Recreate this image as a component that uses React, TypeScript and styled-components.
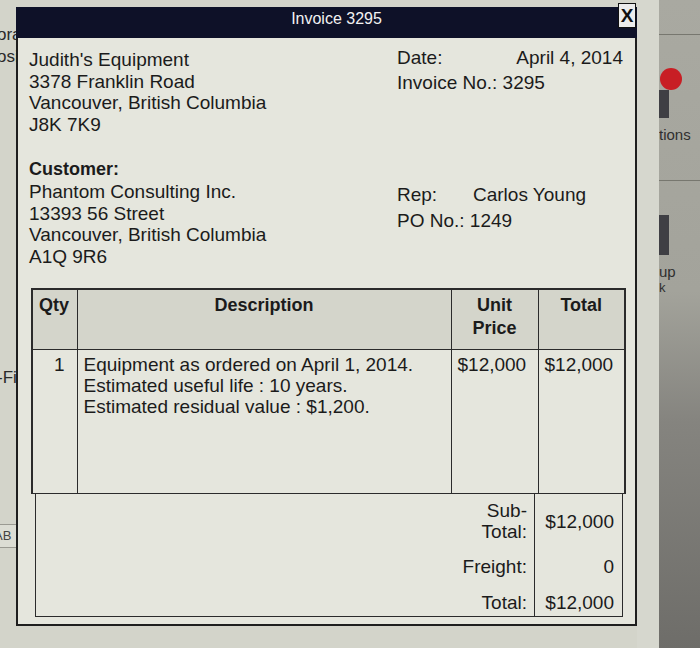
import React from 'react';
import styled, {createGlobalStyle} from "styled-components";

type LineItem = {
    qty: number
    lines: Array<string>
    unitPrice: string
    total: string
}

type TotalLine = {
    label: React.ReactNode
    value: string
    height: number
    pad: number
}

const items: Array<LineItem> = [
    {
        qty: 1,
        lines: [
            'Equipment as ordered on April 1, 2014.',
            'Estimated useful life : 10 years.',
            'Estimated residual value : $1,200.'
        ],
        unitPrice: '$12,000',
        total: '$12,000'
    }
]

const totals: Array<TotalLine> = [
    {label: <>Sub-<br/>Total:</>, value: '$12,000', height: 50, pad: 5},
    {label: 'Freight:', value: '0', height: 38, pad: 8},
    {label: 'Total:', value: '$12,000', height: 34, pad: 8},
]

const App = () => {
    return (
        <>
            <GlobalStyle/>
            <Screen>
                <LeftGutter>
                    <Fragment top={25}>ora</Fragment>
                    <Fragment top={2}>osi</Fragment>
                    <Fragment top={301}>-Fi</Fragment>
                    <GhostButton>AB</GhostButton>
                </LeftGutter>

                <Window>
                    <TitleBar>
                        <span/>
                        <Title>Invoice 3295</Title>
                        <CloseBox>X</CloseBox>
                    </TitleBar>

                    <Body>
                        <InfoRow>
                            <Block>
                                <div>Judith's Equipment</div>
                                <div>3378 Franklin Road</div>
                                <div>Vancouver, British Columbia</div>
                                <div>J8K 7K9</div>
                            </Block>
                            <SideBlock shift={-4} lineHeight={25}>
                                <Pair>
                                    <span>Date:</span>
                                    <span>April 4, 2014</span>
                                </Pair>
                                <div>Invoice No.: 3295</div>
                            </SideBlock>
                        </InfoRow>

                        <InfoRow gap={24}>
                            <Block>
                                <Strong>Customer:</Strong>
                                <div>Phantom Consulting Inc.</div>
                                <div>13393 56 Street</div>
                                <div>Vancouver, British Columbia</div>
                                <div>A1Q 9R6</div>
                            </Block>
                            <SideBlock shift={23} lineHeight={26}>
                                <Pair start>
                                    <Label>Rep:</Label>
                                    <span>Carlos Young</span>
                                </Pair>
                                <div>PO No.: 1249</div>
                            </SideBlock>
                        </InfoRow>

                        <Table>
                            <colgroup>
                                <col style={{width: 45}}/>
                                <col/>
                                <col style={{width: 87}}/>
                                <col style={{width: 87}}/>
                            </colgroup>
                            <thead>
                            <HeadRow>
                                <Th align="left">Qty</Th>
                                <Th>Description</Th>
                                <Th>Unit<br/>Price</Th>
                                <Th>Total</Th>
                            </HeadRow>
                            </thead>
                            <tbody>
                            {items.map((item, i) => (
                                <BodyRow key={i}>
                                    <Td align="right">{item.qty}</Td>
                                    <Td>
                                        {item.lines.map(line => <div key={line}>{line}</div>)}
                                    </Td>
                                    <Td>{item.unitPrice}</Td>
                                    <Td>{item.total}</Td>
                                </BodyRow>
                            ))}
                            </tbody>
                        </Table>

                        <Totals>
                            <LabelColumn>
                                {totals.map((t, i) => (
                                    <TotalCell key={i} height={t.height} pad={t.pad}>{t.label}</TotalCell>
                                ))}
                            </LabelColumn>
                            <ValueColumn>
                                {totals.map((t, i) => (
                                    <TotalCell key={i} height={t.height} pad={t.pad}>{t.value}</TotalCell>
                                ))}
                            </ValueColumn>
                        </Totals>
                    </Body>
                </Window>

                <RightGutter>
                    <LightStrip/>
                    <DarkStrip>
                        <Rule top={34}/>
                        <RedDot/>
                        <DarkBar/>
                        <DockLabel>tions</DockLabel>
                        <Rule top={36}/>
                        <DarkBar tall/>
                        <DockLabel>up</DockLabel>
                        <DockLabel small>k</DockLabel>
                    </DarkStrip>
                </RightGutter>
            </Screen>
        </>
    );
};

export default App;


const GlobalStyle = createGlobalStyle`
  body {
    margin: 0;
    background: #cfd0c6;
    font-family: "Liberation Sans", Arial, sans-serif;
  }
`

const Screen = styled.div`
  width: 700px;
  height: 648px;
  display: flex;
  overflow: hidden;
  background: #d3d4ca;
  color: #1b1b1b;
`

const LeftGutter = styled.div`
  width: 16px;
  flex-shrink: 0;
  display: flex;
  flex-direction: column;
  overflow: hidden;
  font-size: 17px;
  color: #2a2a2a;
`
const Fragment = styled.div<{ top: number }>`
  margin-top: ${props => props.top}px;
  margin-left: -3px;
  white-space: nowrap;
  line-height: 20px;
`
const GhostButton = styled.div`
  margin-top: 136px;
  margin-left: -6px;
  width: 30px;
  height: 22px;
  border-top: 1px solid #9a9a92;
  border-bottom: 1px solid #9a9a92;
  background: #dcddd4;
  font-size: 13px;
  line-height: 22px;
  color: #444;
`

const Window = styled.div`
  width: 621px;
  flex-shrink: 0;
  display: flex;
  flex-direction: column;
  padding-top: 7px;
`
const TitleBar = styled.div`
  height: 31px;
  background: #0e1128;
  display: grid;
  grid-template-columns: 1fr auto 1fr;
  align-items: start;
`
const Title = styled.div`
  color: #f2f2f2;
  font-size: 16px;
  line-height: 24px;
  margin-left: 20px;
`
const CloseBox = styled.div`
  justify-self: end;
  margin-top: -4px;
  margin-right: 1px;
  width: 16px;
  height: 23px;
  background: #ececec;
  border: 1px solid #111;
  color: #111;
  font-size: 19px;
  font-weight: bold;
  line-height: 23px;
  text-align: center;
`
const Body = styled.div`
  background: #e5e6dd;
  border: 2px solid #1e1e1e;
  border-top: none;
  padding: 11px 9px 7px 11px;
  font-size: 19px;
`

const InfoRow = styled.div<{ gap?: number }>`
  display: grid;
  grid-template-columns: 1fr 226px;
  margin-top: ${props => props.gap || 0}px;
  padding-right: 3px;
`
const Block = styled.div`
  line-height: 21.6px;
`
const SideBlock = styled.div<{ shift: number, lineHeight: number }>`
  margin-top: ${props => props.shift}px;
  line-height: ${props => props.lineHeight}px;
`
const Pair = styled.div<{ start?: boolean }>`
  display: flex;
  justify-content: ${props => props.start ? 'flex-start' : 'space-between'};
`
const Label = styled.span`
  width: 76px;
`
const Strong = styled.div`
  font-weight: bold;
  font-size: 18px;
`

const Table = styled.table`
  margin-top: 21px;
  margin-left: 2px;
  width: 595px;
  border-collapse: collapse;
  table-layout: fixed;
  border: 2px solid #2b2b2b;
  border-bottom: none;
`
const HeadRow = styled.tr`
  height: 60px;
`
const Th = styled.th<{ align?: string }>`
  background: #d4d5cb;
  border: 1.5px solid #2b2b2b;
  vertical-align: top;
  text-align: ${props => props.align || 'center'};
  padding: 4px 6px 0;
  font-size: 18px;
  line-height: 23px;
  font-weight: bold;
`
const BodyRow = styled.tr`
  height: 144px;
`
const Td = styled.td<{ align?: string }>`
  border: 1.5px solid #2b2b2b;
  vertical-align: top;
  text-align: ${props => props.align || 'left'};
  padding: 4px ${props => props.align === 'right' ? 12 : 6}px 0 6px;
  line-height: 21px;
  font-size: 19px;
`

const Totals = styled.div`
  width: 586px;
  margin-left: 6px;
  display: flex;
  border: 1.5px solid #2b2b2b;
  border-top: none;
  line-height: 21px;
`
const LabelColumn = styled.div`
  flex: 1;
  border-right: 1.5px solid #2b2b2b;
  text-align: right;
  padding-right: 7px;
`
const ValueColumn = styled.div`
  width: 87px;
  text-align: right;
  padding-right: 8px;
  box-sizing: border-box;
`
const TotalCell = styled.div<{ height: number, pad: number }>`
  height: ${props => props.height}px;
  padding-top: ${props => props.pad}px;
  box-sizing: border-box;
  display: flex;
  flex-direction: column;
  justify-content: center;
`

const RightGutter = styled.div`
  flex: 1;
  display: flex;
`
const LightStrip = styled.div`
  width: 22px;
  background: #d6d7ce;
`
const DarkStrip = styled.div`
  flex: 1;
  display: flex;
  flex-direction: column;
  background: linear-gradient(180deg, #a9a9a1 0%, #a3a39b 45%, #85847f 65%, #6e6d69 100%);
  overflow: hidden;
`
const Rule = styled.div<{ top: number }>`
  height: 1px;
  margin-top: ${props => props.top}px;
  background: #77776f;
`
const RedDot = styled.div`
  width: 22px;
  height: 22px;
  margin-top: 33px;
  margin-left: 1px;
  border-radius: 50%;
  background: #c81e24;
`
const DarkBar = styled.div<{ tall?: boolean }>`
  width: 10px;
  height: ${props => props.tall ? 40 : 28}px;
  margin-top: ${props => props.tall ? 34 : 0}px;
  background: #3f3f44;
`
const DockLabel = styled.div<{ small?: boolean }>`
  margin-top: ${props => props.small ? 0 : 8}px;
  font-size: ${props => props.small ? 13 : 15}px;
  line-height: ${props => props.small ? 14 : 18}px;
  color: #2f2f2f;
  white-space: nowrap;
`
